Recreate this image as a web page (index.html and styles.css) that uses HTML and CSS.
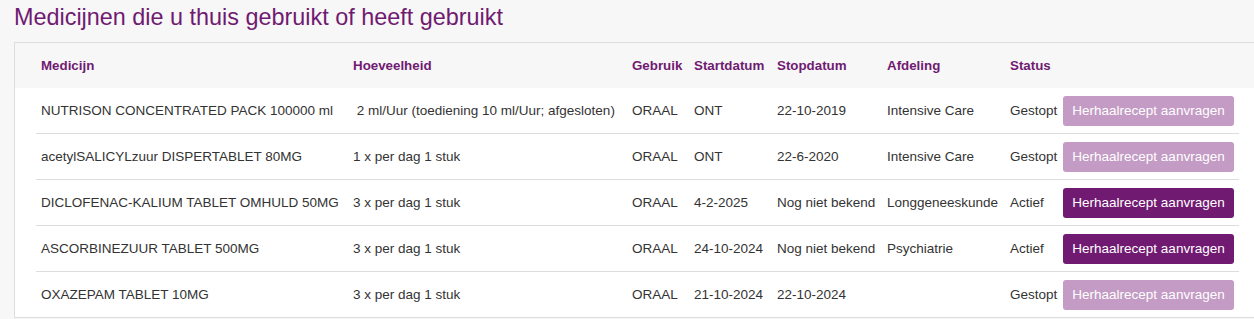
FILE: index.html
```html
<!DOCTYPE html>
<html lang="nl">
<head>
<meta charset="utf-8">
<title>Medicijnen</title>
<link rel="stylesheet" href="styles.css">
</head>
<body>
<div class="page">
  <h1 class="title">Medicijnen die u thuis gebruikt of heeft gebruikt</h1>
  <div class="panel">
    <table class="meds">
      <colgroup>
        <col class="c-med"><col class="c-hoev"><col class="c-geb"><col class="c-start"><col class="c-stop"><col class="c-afd"><col class="c-status"><col class="c-btn">
      </colgroup>
      <thead>
        <tr>
          <th>Medicijn</th><th>Hoeveelheid</th><th>Gebruik</th><th>Startdatum</th><th>Stopdatum</th><th>Afdeling</th><th>Status</th><th></th>
        </tr>
      </thead>
      <tbody>
        <tr>
          <td>NUTRISON CONCENTRATED PACK 100000 ml</td>
          <td>&nbsp;2 ml/Uur (toediening 10 ml/Uur; afgesloten)</td>
          <td>ORAAL</td><td>ONT</td><td>22-10-2019</td><td>Intensive Care</td><td>Gestopt</td>
          <td><button class="btn btn-off" type="button">Herhaalrecept aanvragen</button></td>
        </tr>
        <tr>
          <td>acetylSALICYLzuur DISPERTABLET 80MG</td>
          <td>1 x per dag 1 stuk</td>
          <td>ORAAL</td><td>ONT</td><td>22-6-2020</td><td>Intensive Care</td><td>Gestopt</td>
          <td><button class="btn btn-off" type="button">Herhaalrecept aanvragen</button></td>
        </tr>
        <tr>
          <td>DICLOFENAC-KALIUM TABLET OMHULD 50MG</td>
          <td>3 x per dag 1 stuk</td>
          <td>ORAAL</td><td>4-2-2025</td><td>Nog niet bekend</td><td>Longgeneeskunde</td><td>Actief</td>
          <td><button class="btn btn-on" type="button">Herhaalrecept aanvragen</button></td>
        </tr>
        <tr>
          <td>ASCORBINEZUUR TABLET 500MG</td>
          <td>3 x per dag 1 stuk</td>
          <td>ORAAL</td><td>24-10-2024</td><td>Nog niet bekend</td><td>Psychiatrie</td><td>Actief</td>
          <td><button class="btn btn-on" type="button">Herhaalrecept aanvragen</button></td>
        </tr>
        <tr>
          <td>OXAZEPAM TABLET 10MG</td>
          <td>3 x per dag 1 stuk</td>
          <td>ORAAL</td><td>21-10-2024</td><td>22-10-2024</td><td></td><td>Gestopt</td>
          <td><button class="btn btn-off" type="button">Herhaalrecept aanvragen</button></td>
        </tr>
      </tbody>
    </table>
  </div>
</div>
</body>
</html>
```

FILE: styles.css
```css
html, body {
  margin: 0;
  padding: 0;
  background: #f7f7f7;
  overflow: hidden;
}

body {
  font-family: "Liberation Sans", Arial, sans-serif;
  color: #333;
}

.page {
  padding: 0 0 0 14px;
}

.title {
  margin: 4px 0 11px;
  font-size: 23.4px;
  line-height: 27px;
  font-weight: normal;
  color: #701a72;
}

.panel {
  width: 1250px;
  border: 1px solid #dddddd;
  border-right: none;
  background: linear-gradient(#f7f7f7 0, #f7f7f7 45px, #ffffff 45px);
  padding-left: 21px;
  box-sizing: border-box;
}

.meds {
  width: 1203px;
  border-collapse: collapse;
  table-layout: fixed;
  font-size: 13.33px;
}

.c-med { width: 312px; }
.c-hoev { width: 279px; }
.c-geb { width: 62px; }
.c-start { width: 83px; }
.c-stop { width: 110px; }
.c-afd { width: 123px; }
.c-status { width: 53px; }
.c-btn { width: 181px; }

.meds th,
.meds td {
  padding: 0 5px;
  text-align: left;
  vertical-align: middle;
  white-space: nowrap;
}

.meds th {
  height: 45px;
  font-weight: bold;
  color: #701a72;
}

.meds td {
  height: 45px;
  font-size: 13.5px;
  border-bottom: 1px solid #dddddd;
}

.meds tbody tr:last-child td {
  border-bottom: none;
}

.btn {
  display: block;
  width: 171px;
  height: 30px;
  padding: 0;
  border: none;
  border-radius: 3px;
  font-family: "Liberation Sans", Arial, sans-serif;
  font-size: 13.5px;
  color: #ffffff;
  cursor: pointer;
}

.btn-on {
  background: #701a72;
}

.btn-off {
  background: #c39bc4;
}
```
